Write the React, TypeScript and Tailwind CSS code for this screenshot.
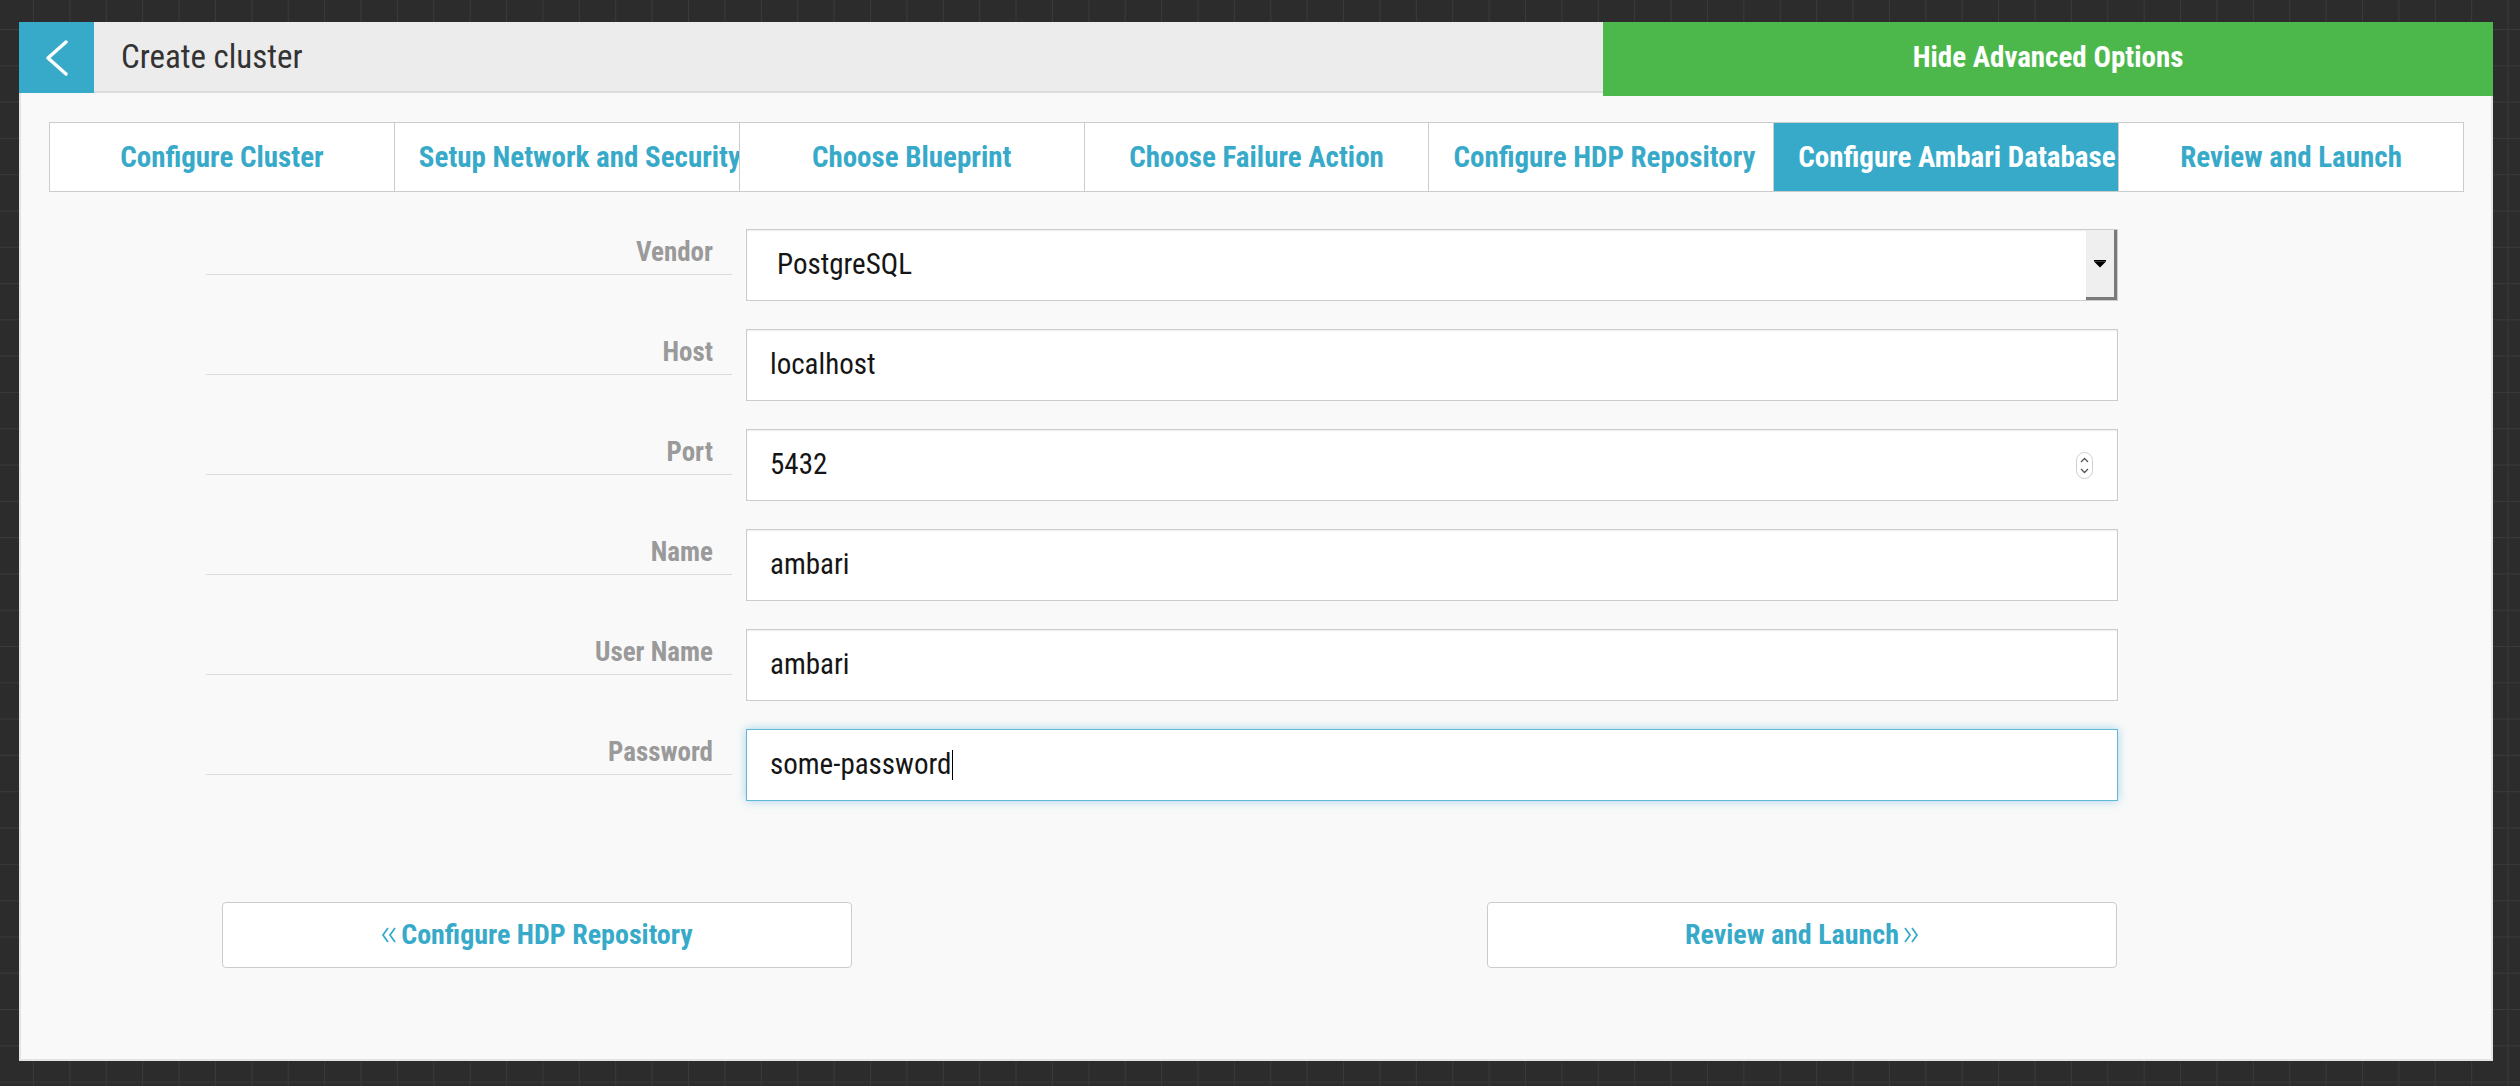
import React from 'react';

const tabs = [
  'Configure Cluster',
  'Setup Network and Security',
  'Choose Blueprint',
  'Choose Failure Action',
  'Configure HDP Repository',
  'Configure Ambari Database',
  'Review and Launch',
];

const fields = [
  { label: 'Vendor', value: 'PostgreSQL', kind: 'select' },
  { label: 'Host', value: 'localhost', kind: 'text' },
  { label: 'Port', value: '5432', kind: 'number' },
  { label: 'Name', value: 'ambari', kind: 'text' },
  { label: 'User Name', value: 'ambari', kind: 'text' },
  { label: 'Password', value: 'some-password', kind: 'focus' },
];

function BackIcon() {
  return (
    <svg width="26" height="36" viewBox="0 0 26 36" fill="none">
      <polyline points="22,2 4,18 22,34" stroke="#fff" strokeWidth="3.4" strokeLinecap="round" strokeLinejoin="round" />
    </svg>
  );
}

function DoubleChevron({ dir }: { dir: 'left' | 'right' }) {
  const pts =
    dir === 'right'
      ? ['2,2 7,9 2,16', '9,2 14,9 9,16']
      : ['7,2 2,9 7,16', '14,2 9,9 14,16'];
  return (
    <svg width="16" height="18" viewBox="0 0 16 18" fill="none">
      {pts.map((p) => (
        <polyline key={p} points={p} stroke="#38aac9" strokeWidth="1.8" strokeLinejoin="miter" />
      ))}
    </svg>
  );
}

function Spinner() {
  return (
    <svg width="17" height="27" viewBox="0 0 17 27" fill="none">
      <rect x="0.5" y="0.5" width="16" height="26" rx="8" fill="#fff" stroke="#cfcfcf" />
      <polyline points="5,10 8.5,6.5 12,10" stroke="#555" strokeWidth="1.3" />
      <polyline points="5,17 8.5,20.5 12,17" stroke="#555" strokeWidth="1.3" />
    </svg>
  );
}

function Field({ label, value, kind }: { label: string; value: string; kind: string }) {
  const focused = kind === 'focus';
  return (
    <div className="flex items-start gap-[14px]">
      <div className="w-[526px] h-[46px] border-b border-[#dcdcdc] pr-[19px] text-right text-[27px] leading-[46px] font-bold text-[#9a9a9a]">
        {label}
      </div>
      <div
        className={
          focused
            ? 'w-[1372px] h-[72px] flex items-center bg-white border border-[#62b6d8] shadow-[0_0_9px_rgba(91,182,216,0.55)] pl-[23px]'
            : 'w-[1372px] h-[72px] flex items-center bg-white border border-[#cccccc] shadow-[inset_0_1px_2px_rgba(0,0,0,0.07)] pl-[23px]'
        }
      >
        <span className={kind === 'select' ? 'flex-1 pl-[7px] text-[29px] text-[#151515]' : 'flex-1 text-[29px] text-[#151515] flex items-center'}>
          {value}
          {focused && <span className="inline-block w-px h-[30px] bg-black ml-px" />}
        </span>
        {kind === 'number' && (
          <div className="mr-[24px] flex items-center">
            <Spinner />
          </div>
        )}
        {kind === 'select' && (
          <div className="w-[31px] h-[70px] bg-[#efefef] border-r-[3px] border-b-[3px] border-[#7a7a7a] flex items-center justify-center">
            <svg width="12" height="8" viewBox="0 0 12 8">
              <rect x="0" y="0" width="12" height="1.5" fill="#000" />
              <polygon points="0,1.5 12,1.5 6,7.5" fill="#000" />
            </svg>
          </div>
        )}
      </div>
    </div>
  );
}

export default function App() {
  return (
    <div className="min-h-screen w-full bg-[#2c2c2c] bg-[linear-gradient(to_right,#3a3a3a_1px,transparent_1px),linear-gradient(to_bottom,#3a3a3a_1px,transparent_1px)] bg-[size:36.4px_36.3px] bg-[position:33px_29px] pl-[19px] pt-[22px] pb-[25px] font-['Roboto_Condensed',Roboto,sans-serif]">
      <div className="w-[2474px]">
        {/* header bar */}
        <div className="flex items-start h-[71px]">
          <div className="w-[75px] h-[71px] bg-[#38aac9] flex items-center justify-center">
            <BackIcon />
          </div>
          <div className="flex-1 h-[71px] bg-[#ececec] border-b-2 border-[#dcdcdc] flex items-center pl-[27px] text-[33px] text-[#333]">
            Create cluster
          </div>
          <div className="relative z-10 w-[890px] h-[74px] pb-[3px] bg-[#4cb84c] flex items-center justify-center text-[29px] font-bold text-white">
            Hide Advanced Options
          </div>
        </div>

        {/* body */}
        <div className="h-[968px] bg-[#f9f9f9] border-x-2 border-b-2 border-[#e4e4e4]">
          <div className="pt-[29px] pl-[28px] pr-[27px]">
            <div className="flex h-[70px] border border-[#cccccc] bg-white">
              {tabs.map((t, i) => (
                <div
                  key={t}
                  className={
                    i === 5
                      ? 'flex-1 overflow-hidden whitespace-nowrap px-[24px] text-center text-[29px] font-bold leading-[68px] bg-[#38aac9] text-white border-l border-[#cccccc]'
                      : i === 0
                        ? 'flex-1 overflow-hidden whitespace-nowrap px-[24px] text-center text-[29px] font-bold leading-[68px] text-[#38aac9]'
                        : 'flex-1 overflow-hidden whitespace-nowrap px-[24px] text-center text-[29px] font-bold leading-[68px] text-[#38aac9] border-l border-[#cccccc]'
                  }
                >
                  {t}
                </div>
              ))}
            </div>
          </div>

          <div className="ml-[185px] mt-[37px] w-[1912px] flex flex-col gap-[28px]">
            {fields.map((f) => (
              <Field key={f.label} {...f} />
            ))}
          </div>

          <div className="ml-[185px] mt-[101px] w-[1912px] flex justify-between pl-[16px] pr-[1px]">
            <button className="w-[630px] h-[66px] bg-white border border-[#cccccc] rounded-[4px] flex items-center justify-center gap-[4px] text-[28px] font-bold text-[#38aac9]">
              <DoubleChevron dir="left" />
              Configure HDP Repository
            </button>
            <button className="w-[630px] h-[66px] bg-white border border-[#cccccc] rounded-[4px] flex items-center justify-center gap-[4px] text-[28px] font-bold text-[#38aac9]">
              Review and Launch
              <DoubleChevron dir="right" />
            </button>
          </div>
        </div>
      </div>
    </div>
  );
}
